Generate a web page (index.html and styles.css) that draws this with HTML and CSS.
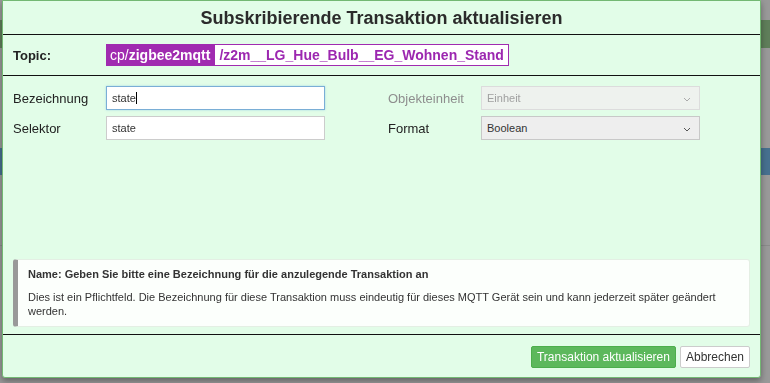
FILE: index.html
```html
<!DOCTYPE html>
<html lang="de">

<head>
    <meta charset="UTF-8">
    <title>Transaktion aktualisieren</title>
    <link rel="stylesheet" href="styles.css">
</head>

<body>
    <!-- Page behind the dialog -->
    <div class="page">
        <div class="page-bar page-bar-green"></div>
        <div class="page-bar page-bar-blue"></div>
        <div class="page-rule"></div>
    </div>

    <!-- Dialog -->
    <div class="modal">
        <div class="modal-header">Subskribierende Transaktion aktualisieren</div>

        <div class="topic-row">
            <span class="topic-label">Topic:</span>
            <span class="topic-base">cp/<b>zigbee2mqtt</b></span>
            <span class="topic-path">/z2m__LG_Hue_Bulb__EG_Wohnen_Stand</span>
        </div>

        <div class="modal-body">
            <div class="form-grid">
                <div class="form-row">
                    <label>Bezeichnung</label>
                    <div class="fake-input focused">state<span class="caret"></span></div>
                </div>
                <div class="form-row disabled">
                    <label>Objekteinheit</label>
                    <div class="fake-select">
                        <span>Einheit</span>
                        <svg class="chevron" width="8" height="5" viewBox="0 0 8 5"><path d="M1 1 L4 4 L7 1" fill="none" stroke="currentColor" stroke-width="1"/></svg>
                    </div>
                </div>
                <div class="form-row">
                    <label>Selektor</label>
                    <div class="fake-input">state</div>
                </div>
                <div class="form-row">
                    <label>Format</label>
                    <div class="fake-select">
                        <span>Boolean</span>
                        <svg class="chevron" width="8" height="5" viewBox="0 0 8 5"><path d="M1 1 L4 4 L7 1" fill="none" stroke="currentColor" stroke-width="1"/></svg>
                    </div>
                </div>
            </div>

            <div class="help-box">
                <p class="help-title">Name: Geben Sie bitte eine Bezeichnung für die anzulegende Transaktion an</p>
                <p class="help-text">Dies ist ein Pflichtfeld. Die Bezeichnung für diese Transaktion muss eindeutig für dieses MQTT Gerät sein und kann jederzeit später geändert werden.</p>
            </div>
        </div>

        <div class="modal-footer">
            <button class="btn btn-success">Transaktion aktualisieren</button>
            <button class="btn btn-default">Abbrechen</button>
        </div>
    </div>
</body>

</html>
```

FILE: styles.css
```css
/* Reset */
* {
    box-sizing: border-box;
    margin: 0;
    padding: 0;
}

body {
    font-family: 'Liberation Sans', Arial, sans-serif;
    color: #222;
    background: #999;
    height: 383px;
    overflow: hidden;
}

/* Page under the overlay */
.page {
    display: flex;
    flex-direction: column;
    padding-top: 20px;
}

.page-bar {
    height: 28px;
}

.page-bar-green {
    background: #5f7e5a;
}

.page-bar-blue {
    margin-top: 100px;
    height: 27px;
    background: #46708f;
}

.page-rule {
    margin-top: 70px;
    height: 1px;
    background: #8a8a8a;
}

/* Dialog */
.modal {
    position: fixed;
    top: 0;
    left: 2px;
    width: 759px;
    height: 378px;
    background: #e2fde8;
    border: 1px solid #73b873;
    border-radius: 0 0 3px 3px;
    box-shadow: 0 3px 6px rgba(0, 0, 0, 0.35);
    display: flex;
    flex-direction: column;
}

.modal-header {
    height: 34px;
    line-height: 34px;
    text-align: center;
    font-size: 18px;
    font-weight: bold;
    color: #2b2b2b;
    border-bottom: 1px solid #111;
}

.topic-row {
    height: 41px;
    display: flex;
    align-items: center;
    padding: 0 10px;
    border-bottom: 1px solid #111;
    font-size: 14px;
}

.topic-label {
    width: 93px;
    font-size: 13px;
    font-weight: bold;
}

.topic-base {
    background: #a02bb0;
    color: #fff;
    height: 22px;
    line-height: 22px;
    padding: 0 4px;
}

.topic-path {
    height: 22px;
    line-height: 20px;
    border: 1px solid #a02bb0;
    background: #fff;
    color: #9c27b0;
    font-weight: bold;
    padding: 0 4px;
}

.modal-body {
    flex: 1;
    display: flex;
    flex-direction: column;
    padding: 10px 10px 7px;
}

.form-grid {
    display: grid;
    grid-template-columns: 312px 312px;
    column-gap: 63px;
    row-gap: 6px;
}

.form-row {
    display: grid;
    grid-template-columns: 93px 219px;
    align-items: center;
    font-size: 13px;
}

.form-row.disabled label {
    color: #8e8e8e;
}

.fake-input,
.fake-select {
    height: 24px;
    line-height: 22px;
    border: 1px solid #ccc;
    background: #fff;
    padding: 0 5px;
    font-size: 11px;
    color: #333;
}

.fake-input.focused {
    border-color: #7aaed6;
    box-shadow: 0 0 2px rgba(102, 175, 233, 0.5);
}

.caret {
    display: inline-block;
    width: 1px;
    height: 12px;
    background: #000;
    vertical-align: -2px;
}

.fake-select {
    position: relative;
    background: #eee;
    border-color: #c8c8c8;
    display: flex;
    align-items: center;
}

.chevron {
    position: absolute;
    right: 8px;
    top: 10px;
    color: #555;
}

.disabled .fake-select {
    background: #eef2ee;
    border-color: #dcdcdc;
    color: #a0a0a0;
}

.disabled .chevron {
    color: #aaa;
}

/* Help box */
.help-box {
    margin-top: auto;
    height: 68px;
    background: #fcfffc;
    border: 1px solid #e4efe4;
    border-left: 5px solid #999;
    border-radius: 3px;
    padding: 7px 10px;
    font-size: 11px;
    color: #333;
}

.help-title {
    font-weight: bold;
    line-height: 14px;
    margin-bottom: 9px;
}

.help-text {
    line-height: 14px;
}

/* Footer */
.modal-footer {
    border-top: 1px solid #111;
    display: flex;
    justify-content: flex-end;
    align-items: flex-start;
    gap: 4px;
    padding: 11px 10px 0;
    height: 43px;
}

.btn {
    font-family: 'Liberation Sans', Arial, sans-serif;
    font-size: 12px;
    height: 22px;
    padding: 0 5px;
    border-radius: 2px;
    cursor: pointer;
}

.btn-success {
    background: #5cb85c;
    border: 1px solid #4cae4c;
    color: #fff;
}

.btn-default {
    background: #fff;
    border: 1px solid #ccc;
    color: #333;
}
```
